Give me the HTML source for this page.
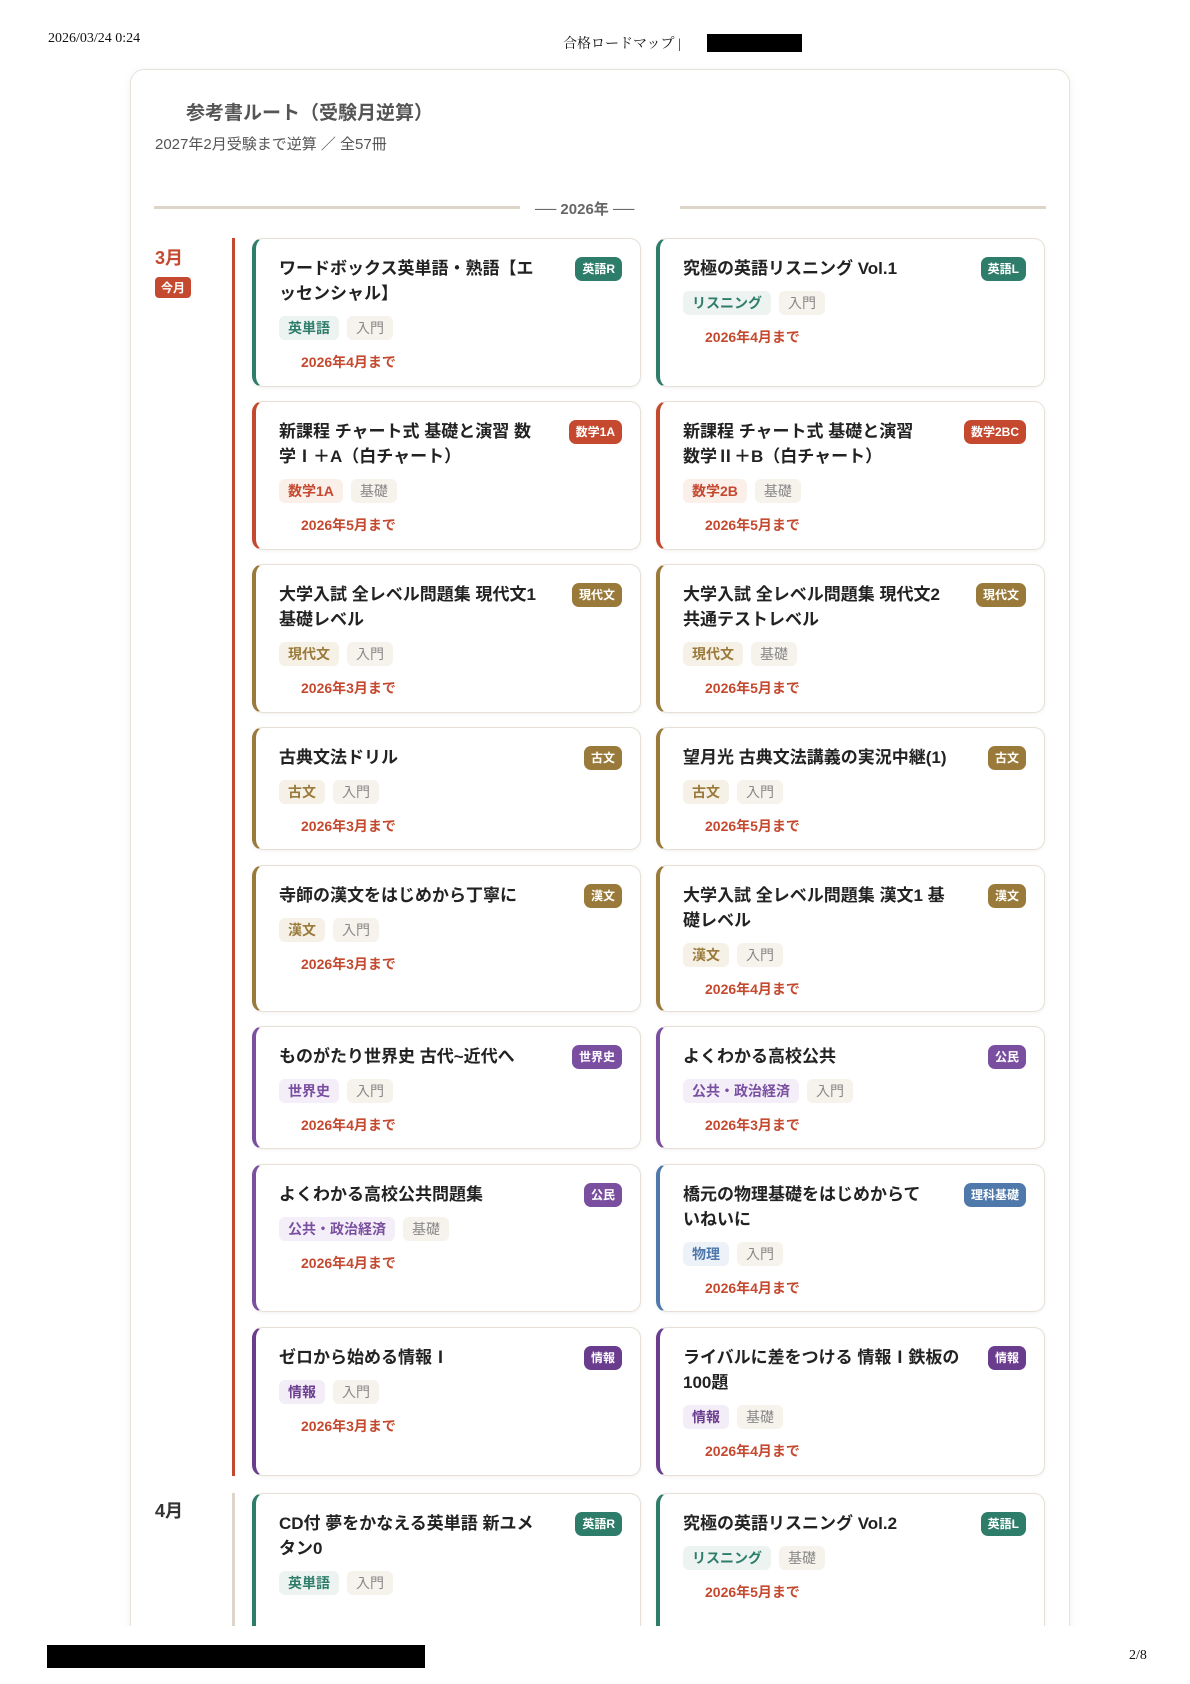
<!DOCTYPE html>
<html style="height:1684px;overflow:hidden"><head><meta charset="utf-8">
<style>
*{box-sizing:border-box;margin:0;padding:0}
body{width:1190px;height:1684px;background:#fff;position:relative;overflow:hidden;font-family:"Liberation Sans","Noto Sans CJK JP",sans-serif;color:#2b2b2b}
.hd{position:absolute;font-family:"Liberation Serif","Noto Serif CJK SC",serif;font-size:14px;color:#111}
.blk{position:absolute;background:#000}
.wrap{position:absolute;left:130px;top:69px;width:940px;height:1600px;border:1px solid #e7e2d8;border-radius:14px;box-shadow:0 2px 10px rgba(0,0,0,.06);background:#fff}
.cut{position:absolute;left:0;top:1626px;width:1190px;height:80px;background:#fff}
.t1{position:absolute;left:186px;top:98px;font-size:19px;font-weight:700;color:#555}
.t2{position:absolute;left:155px;top:133px;font-size:15px;color:#555}
.yl{position:absolute;top:206px;height:3px;background:#ddd6c8}
.yt{position:absolute;left:535px;top:198px;font-size:15px;font-weight:700;color:#666}
.vl{position:absolute;left:232px;width:3px}
.mo{position:absolute;left:155px;font-size:18px;font-weight:700}
.now{position:absolute;left:155px;top:277px;background:#c4492f;color:#fff;font-size:12px;font-weight:700;padding:2px 6px;border-radius:4px}
.c{position:absolute;width:389px;border:1px solid #e6e0d6;border-left:4px solid;border-radius:11px;background:#fff;box-shadow:0 1px 4px rgba(0,0,0,.06);padding:17px 0 0 23px}
.c .ti{font-size:17px;font-weight:700;line-height:25px;white-space:nowrap;color:#222}
.c .bd{position:absolute;right:18px;top:18px;color:#fff;font-size:12px;font-weight:700;padding:3px 7px;border-radius:7px;line-height:18px}
.tg{margin-top:10px;height:24px;display:flex;gap:8px}
.tg span{font-size:14px;font-weight:700;padding:0 9px;line-height:24px;border-radius:6px}
.tg span.l{color:#888;background:#f6f2ec;font-weight:400}
.dt{margin-top:12px;margin-left:22px;font-size:14px;font-weight:700;color:#c4492f;line-height:20px}
</style></head><body>
<div class="hd" style="left:48px;top:31px">2026/03/24 0:24</div>
<div class="hd" style="left:563px;top:33px">合格ロードマップ |</div>
<div class="blk" style="left:707px;top:34px;width:95px;height:18px"></div>
<div class="wrap"></div>
<div class="t1">参考書ルート（受験月逆算）</div>
<div class="t2">2027年2月受験まで逆算 ／ 全57冊</div>
<div class="yl" style="left:154px;width:366px"></div>
<div class="yl" style="left:680px;width:366px"></div>
<div class="yt">── 2026年 ──</div>
<div class="vl" style="top:238px;height:1238px;background:#c4492f"></div>
<div class="vl" style="top:1493px;height:200px;background:#ddd6c8"></div>
<div class="mo" style="top:244px;color:#c4492f">3月</div>
<div class="now">今月</div>
<div class="mo" style="top:1497px;color:#333">4月</div>

<div class="c" style="left:252px;top:238px;height:149px;border-left-color:#2e7d6b"><div class="ti">ワードボックス英単語・熟語【エ<br>ッセンシャル】</div><div class="bd" style="background:#2e7d6b">英語R</div><div class="tg"><span style="color:#2e7d6b;background:#edf3f0">英単語</span><span class="l">入門</span></div><div class="dt">2026年4月まで</div></div>
<div class="c" style="left:656px;top:238px;height:149px;border-left-color:#2e7d6b"><div class="ti">究極の英語リスニング Vol.1</div><div class="bd" style="background:#2e7d6b">英語L</div><div class="tg"><span style="color:#2e7d6b;background:#edf3f0">リスニング</span><span class="l">入門</span></div><div class="dt">2026年4月まで</div></div>
<div class="c" style="left:252px;top:401px;height:149px;border-left-color:#c4492f"><div class="ti">新課程 チャート式 基礎と演習 数<br>学Ⅰ＋A（白チャート）</div><div class="bd" style="background:#c4492f">数学1A</div><div class="tg"><span style="color:#c4492f;background:#fbefea">数学1A</span><span class="l">基礎</span></div><div class="dt">2026年5月まで</div></div>
<div class="c" style="left:656px;top:401px;height:149px;border-left-color:#c4492f"><div class="ti">新課程 チャート式 基礎と演習<br>数学Ⅱ＋B（白チャート）</div><div class="bd" style="background:#c4492f">数学2BC</div><div class="tg"><span style="color:#c4492f;background:#fbefea">数学2B</span><span class="l">基礎</span></div><div class="dt">2026年5月まで</div></div>
<div class="c" style="left:252px;top:564px;height:149px;border-left-color:#9a7a3a"><div class="ti">大学入試 全レベル問題集 現代文1<br>基礎レベル</div><div class="bd" style="background:#9a7a3a">現代文</div><div class="tg"><span style="color:#9a7a3a;background:#f6f1e6">現代文</span><span class="l">入門</span></div><div class="dt">2026年3月まで</div></div>
<div class="c" style="left:656px;top:564px;height:149px;border-left-color:#9a7a3a"><div class="ti">大学入試 全レベル問題集 現代文2<br>共通テストレベル</div><div class="bd" style="background:#9a7a3a">現代文</div><div class="tg"><span style="color:#9a7a3a;background:#f6f1e6">現代文</span><span class="l">基礎</span></div><div class="dt">2026年5月まで</div></div>
<div class="c" style="left:252px;top:727px;height:123px;border-left-color:#9a7a3a"><div class="ti">古典文法ドリル</div><div class="bd" style="background:#9a7a3a">古文</div><div class="tg"><span style="color:#9a7a3a;background:#f6f1e6">古文</span><span class="l">入門</span></div><div class="dt">2026年3月まで</div></div>
<div class="c" style="left:656px;top:727px;height:123px;border-left-color:#9a7a3a"><div class="ti">望月光 古典文法講義の実況中継(1)</div><div class="bd" style="background:#9a7a3a">古文</div><div class="tg"><span style="color:#9a7a3a;background:#f6f1e6">古文</span><span class="l">入門</span></div><div class="dt">2026年5月まで</div></div>
<div class="c" style="left:252px;top:865px;height:147px;border-left-color:#9a7a3a"><div class="ti">寺師の漢文をはじめから丁寧に</div><div class="bd" style="background:#9a7a3a">漢文</div><div class="tg"><span style="color:#9a7a3a;background:#f6f1e6">漢文</span><span class="l">入門</span></div><div class="dt">2026年3月まで</div></div>
<div class="c" style="left:656px;top:865px;height:147px;border-left-color:#9a7a3a"><div class="ti">大学入試 全レベル問題集 漢文1 基<br>礎レベル</div><div class="bd" style="background:#9a7a3a">漢文</div><div class="tg"><span style="color:#9a7a3a;background:#f6f1e6">漢文</span><span class="l">入門</span></div><div class="dt">2026年4月まで</div></div>
<div class="c" style="left:252px;top:1026px;height:123px;border-left-color:#7a4fa0"><div class="ti">ものがたり世界史 古代~近代へ</div><div class="bd" style="background:#7a4fa0">世界史</div><div class="tg"><span style="color:#7a4fa0;background:#f3eef8">世界史</span><span class="l">入門</span></div><div class="dt">2026年4月まで</div></div>
<div class="c" style="left:656px;top:1026px;height:123px;border-left-color:#7a4fa0"><div class="ti">よくわかる高校公共</div><div class="bd" style="background:#7a4fa0">公民</div><div class="tg"><span style="color:#7a4fa0;background:#f3eef8">公共・政治経済</span><span class="l">入門</span></div><div class="dt">2026年3月まで</div></div>
<div class="c" style="left:252px;top:1164px;height:148px;border-left-color:#7a4fa0"><div class="ti">よくわかる高校公共問題集</div><div class="bd" style="background:#7a4fa0">公民</div><div class="tg"><span style="color:#7a4fa0;background:#f3eef8">公共・政治経済</span><span class="l">基礎</span></div><div class="dt">2026年4月まで</div></div>
<div class="c" style="left:656px;top:1164px;height:148px;border-left-color:#4f78ab"><div class="ti">橋元の物理基礎をはじめからて<br>いねいに</div><div class="bd" style="background:#4f78ab">理科基礎</div><div class="tg"><span style="color:#4f78ab;background:#edf2f8">物理</span><span class="l">入門</span></div><div class="dt">2026年4月まで</div></div>
<div class="c" style="left:252px;top:1327px;height:149px;border-left-color:#6a3c8e"><div class="ti">ゼロから始める情報Ⅰ</div><div class="bd" style="background:#6a3c8e">情報</div><div class="tg"><span style="color:#6a3c8e;background:#f2edf7">情報</span><span class="l">入門</span></div><div class="dt">2026年3月まで</div></div>
<div class="c" style="left:656px;top:1327px;height:149px;border-left-color:#6a3c8e"><div class="ti">ライバルに差をつける 情報Ⅰ鉄板の<br>100題</div><div class="bd" style="background:#6a3c8e">情報</div><div class="tg"><span style="color:#6a3c8e;background:#f2edf7">情報</span><span class="l">基礎</span></div><div class="dt">2026年4月まで</div></div>
<div class="c" style="left:252px;top:1493px;height:180px;border-left-color:#2e7d6b"><div class="ti">CD付 夢をかなえる英単語 新ユメ<br>タン0</div><div class="bd" style="background:#2e7d6b">英語R</div><div class="tg"><span style="color:#2e7d6b;background:#edf3f0">英単語</span><span class="l">入門</span></div></div>
<div class="c" style="left:656px;top:1493px;height:180px;border-left-color:#2e7d6b"><div class="ti">究極の英語リスニング Vol.2</div><div class="bd" style="background:#2e7d6b">英語L</div><div class="tg"><span style="color:#2e7d6b;background:#edf3f0">リスニング</span><span class="l">基礎</span></div><div class="dt">2026年5月まで</div></div>

<div class="cut"></div>
<div class="blk" style="left:47px;top:1645px;width:378px;height:23px"></div>
<div class="hd" style="left:1129px;top:1648px">2/8</div>
</body></html>
